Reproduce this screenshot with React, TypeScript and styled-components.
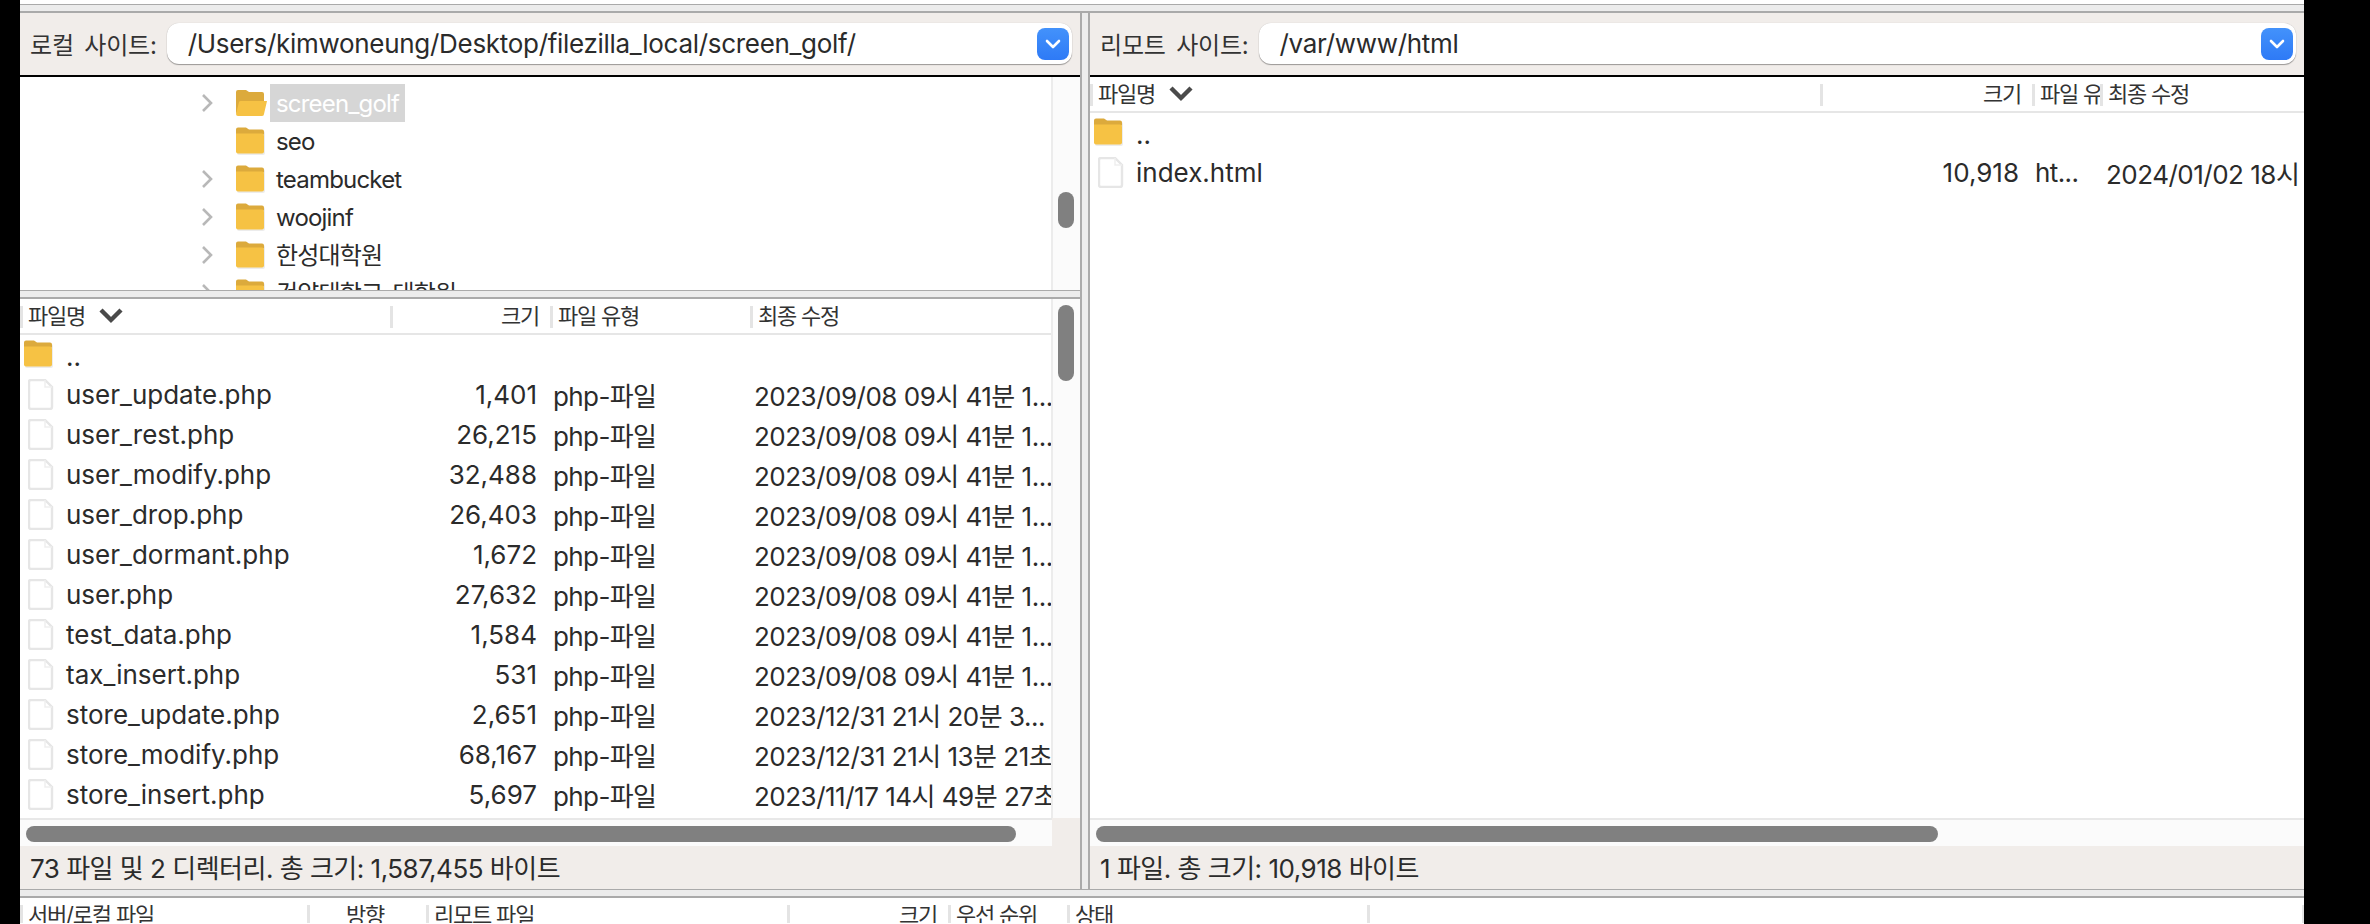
import React from "react";
import styled, { createGlobalStyle } from "styled-components";

const FONT = `Inter, "Noto Sans CJK KR", sans-serif`;

const Global = createGlobalStyle`
  html, body { margin: 0; padding: 0; background: #000; }
  * { box-sizing: border-box; }
`;

const Screen = styled.div`
  width: 2370px;
  height: 924px;
  background: #000;
  overflow: hidden;
  padding-left: 20px;
  font-family: ${FONT};
  color: #2b2b2b;
`;
const Win = styled.div`
  width: 2284px;
  height: 924px;
  display: flex;
  flex-direction: column;
  background: #fff;
  overflow: hidden;
`;
const LogStrip = styled.div`
  height: 5px;
  flex: none;
  overflow: hidden;
  background: #fff;
  border-bottom: 1px solid #aaa;
  position: relative;
`;
const LogText = styled.div`
  position: absolute;
  left: 8px;
  bottom: 2px;
  font-size: 22px;
  line-height: 26px;
  white-space: nowrap;
  color: #444;
`;
const SashH = styled.div`
  height: 8px;
  flex: none;
  background: #ececec;
  border-bottom: 2px solid #aaa;
`;
const SashHTop = styled(SashH)`
  height: 9px;
  border-top: 1px solid #aaa;
`;
const Panes = styled.div`
  display: flex;
  height: 876px;
  flex: none;
`;
const Pane = styled.div<{ $w: number }>`
  width: ${(p) => p.$w}px;
  flex: none;
  display: flex;
  flex-direction: column;
`;
const SashV = styled.div`
  width: 10px;
  flex: none;
  background: #ececec;
  border-left: 2px solid #aaa;
  border-right: 2px solid #aaa;
`;
const SiteBar = styled.div`
  height: 64px;
  flex: none;
  display: flex;
  align-items: center;
  background: #f1edea;
  border-bottom: 2px solid #000;
  padding: 0 8px 1px 10px;
  gap: 10px;
`;
const SiteLabel = styled.span`
  font-size: 24px;
  letter-spacing: -0.2px;
  word-spacing: 4px;
  white-space: nowrap;
  flex: none;
  color: #333;
`;
const Combo = styled.div`
  flex: 1;
  height: 41px;
  background: #fff;
  border-radius: 12px;
  box-shadow: 0 1px 1px rgba(0, 0, 0, 0.35), 0 0 1px rgba(0, 0, 0, 0.2);
  display: flex;
  align-items: center;
  padding: 0 3px 0 21px;
`;
const ComboText = styled.span`
  flex: 1;
  font-size: 26px;
  letter-spacing: -0.3px;
  color: #2b2b2b;
  white-space: nowrap;
`;
const ComboBtn = styled.div`
  width: 32px;
  height: 32px;
  flex: none;
  border-radius: 8px;
  background: linear-gradient(#4392fb, #2e7af6);
  display: flex;
  align-items: center;
  justify-content: center;
`;
const Tree = styled.div`
  height: 213px;
  flex: none;
  display: flex;
  overflow: hidden;
  background: #fff;
`;
const TreeRows = styled.div`
  flex: 1;
  padding-top: 7px;
  overflow: hidden;
`;
const TreeRow = styled.div`
  height: 38px;
  display: flex;
  align-items: center;
  padding-left: 181px;
`;
const ChevronSlot = styled.div`
  width: 35px;
  flex: none;
  display: flex;
`;
const FolderSlot = styled.div`
  width: 34px;
  flex: none;
  display: flex;
`;
const TreeLabel = styled.span<{ $selected?: boolean }>`
  height: 38px;
  line-height: 40px;
  padding: 0 6px;
  font-size: 24px;
  white-space: nowrap;
  letter-spacing: -0.8px;
  color: ${(p) => (p.$selected ? "#fff" : "#2b2b2b")};
  background: ${(p) => (p.$selected ? "#d6d6d6" : "transparent")};
`;
const VTrack = styled.div`
  width: 29px;
  flex: none;
  background: #fbfbfb;
  border-left: 2px solid #ececec;
  padding-left: 5px;
`;
const VThumb = styled.div<{ $top: number; $h: number }>`
  width: 16px;
  height: ${(p) => p.$h}px;
  margin-top: ${(p) => p.$top}px;
  border-radius: 8px;
  background: #808080;
`;
const ListWrap = styled.div`
  flex: 1;
  min-height: 0;
  display: flex;
  overflow: hidden;
  background: #fff;
`;
const ListMain = styled.div`
  flex: 1;
  min-width: 0;
  overflow: hidden;
`;
const HeaderRow = styled.div<{ $cols: string }>`
  height: 36px;
  display: grid;
  grid-template-columns: ${(p) => p.$cols};
  align-items: start;
  padding-top: 7px;
  border-bottom: 2px solid #e6e6e6;
`;
const QueueHeader = styled(HeaderRow)`
  height: 25px;
  flex: none;
  border-bottom: none;
  overflow: hidden;
`;
const HeadCell = styled.div<{ $align?: string }>`
  height: 22px;
  line-height: 20px;
  border-left: 3px solid #e4e4e4;
  padding: 0 11px 0 5px;
  font-size: 22px;
  letter-spacing: -1.2px;
  color: #333;
  white-space: nowrap;
  overflow: hidden;
  text-align: ${(p) => p.$align || "left"};
`;
const HeadCellLabel = styled.span`
  display: inline-flex;
  align-items: center;
  gap: 14px;
`;
const Row = styled.div<{ $cols: string }>`
  height: 40px;
  padding-bottom: 2px;
  display: grid;
  grid-template-columns: ${(p) => p.$cols};
  align-items: center;
  font-size: 26px;
`;
const NameCell = styled.div`
  display: flex;
  align-items: center;
  min-width: 0;
  white-space: nowrap;
`;
const IconSlot = styled.div`
  width: 46px;
  flex: none;
  display: flex;
  padding-left: 4px;
`;
const FileSlot = styled(IconSlot)`
  padding-left: 8px;
`;
const NameText = styled.span``;
const DotsText = styled(NameText)`
  margin-top: 5px;
`;
const SizeCell = styled.div`
  text-align: right;
  padding-right: 13px;
`;
const TypeCell = styled.div`
  padding-left: 3px;
  white-space: nowrap;
  overflow: hidden;
  letter-spacing: -0.6px;
`;
const DateCell = styled.div<{ $pad: number }>`
  padding-left: ${(p) => p.$pad}px;
  white-space: nowrap;
  overflow: hidden;
  letter-spacing: -0.5px;
`;
const HBar = styled.div`
  height: 28px;
  flex: none;
  display: flex;
  background: #f1edea;
`;
const HTrack = styled.div`
  flex: 1;
  background: #fbfbfb;
  border-top: 2px solid #e8e8e8;
  padding: 6px 0 0 6px;
`;
const HCorner = styled.div`
  width: 28px;
  flex: none;
  background: #f1edea;
`;
const HThumb = styled.div<{ $w: number }>`
  width: ${(p) => p.$w}px;
  height: 16px;
  border-radius: 8px;
  background: #808080;
`;
const StatusBar = styled.div`
  height: 43px;
  flex: none;
  background: #f1edea;
  display: flex;
  align-items: center;
  padding: 0 0 2px 10px;
  font-size: 26px;
  letter-spacing: -0.5px;
  color: #2b2b2b;
  white-space: nowrap;
`;

const Folder = ({ open }: { open?: boolean }) =>
  open ? (
    <svg width="32" height="28" viewBox="0 0 32 28">
      <path d="M0 3a2 2 0 0 1 2-2h8l3 2h13a2 2 0 0 1 2 2v20H2a2 2 0 0 1-2-2z" fill="#dcaa3c" />
      <path d="M3 13a2 2 0 0 1 2-1h26l-3 13a2 2 0 0 1-2 2H2a2 2 0 0 1-2-2z" fill="#f6c244" />
    </svg>
  ) : (
    <svg width="30" height="28" viewBox="0 0 30 28">
      <rect x="1" y="4" width="28" height="24" rx="2" fill="#ececec" />
      <path d="M0 2.5A2 2 0 0 1 2 .5h8l3 2h13a2 2 0 0 1 2 2v3H0z" fill="#dcaa3c" />
      <path d="M0 6.5h26a2 2 0 0 1 2 2v16a2 2 0 0 1-2 2H2a2 2 0 0 1-2-2z" fill="#f6c244" />
    </svg>
  );

const FileIcon = () => (
  <svg width="26" height="31" viewBox="0 0 26 31">
    <path
      d="M3 1h14l7 7v20a2 2 0 0 1-2 2H3a2 2 0 0 1-2-2V3a2 2 0 0 1 2-2z"
      fill="#fff"
      stroke="#e6e6e6"
      strokeWidth="2.4"
    />
    <path d="M17 1v7h7" fill="none" stroke="#efefef" strokeWidth="1.5" />
  </svg>
);

const TreeChevron = () => (
  <svg width="12" height="20" viewBox="0 0 12 20">
    <path d="M2 2l8 8-8 8" fill="none" stroke="#b8b8b8" strokeWidth="2.6" />
  </svg>
);

const SortChevron = () => (
  <svg width="24" height="18" viewBox="0 0 24 18">
    <path d="M2 3l10 10L22 3" fill="none" stroke="#4a4a4a" strokeWidth="4.4" />
  </svg>
);

const ComboChevron = () => (
  <svg width="16" height="12" viewBox="0 0 16 12">
    <path d="M2 3l6 6 6-6" fill="none" stroke="#fff" strokeWidth="2.6" strokeLinecap="round" strokeLinejoin="round" />
  </svg>
);

const LEFT_COLS = "370px 160px 200px 301px";
const RIGHT_COLS = "730px 212px 68px 204px";
const QUEUE_COLS = "287px 119px 361px 161px 119px 300px 935px 2px";

const D1 = "2023/09/08 09시 41분 1...";
const files: [string, string, string][] = [
  ["user_update.php", "1,401", D1],
  ["user_rest.php", "26,215", D1],
  ["user_modify.php", "32,488", D1],
  ["user_drop.php", "26,403", D1],
  ["user_dormant.php", "1,672", D1],
  ["user.php", "27,632", D1],
  ["test_data.php", "1,584", D1],
  ["tax_insert.php", "531", D1],
  ["store_update.php", "2,651", "2023/12/31 21시 20분 3..."],
  ["store_modify.php", "68,167", "2023/12/31 21시 13분 21초"],
  ["store_insert.php", "5,697", "2023/11/17 14시 49분 27초"],
];

const tree: { name: string; chevron: boolean; open?: boolean; selected?: boolean }[] = [
  { name: "screen_golf", chevron: true, open: true, selected: true },
  { name: "seo", chevron: false },
  { name: "teambucket", chevron: true },
  { name: "woojinf", chevron: true },
  { name: "한성대학원", chevron: true },
  { name: "건양대학교_대학원", chevron: true },
];

const ParentRow = ({ cols }: { cols: string }) => (
  <Row $cols={cols}>
    <NameCell>
      <IconSlot>
        <Folder />
      </IconSlot>
      <DotsText>..</DotsText>
    </NameCell>
  </Row>
);

export default function App() {
  return (
    <Screen>
      <Global />
      <Win>
        <LogStrip>
          <LogText>상태:  "/var/www/html" 디렉터리 목록 조회 성공</LogText>
        </LogStrip>
        <SashH />
        <Panes>
          <Pane $w={1060}>
            <SiteBar>
              <SiteLabel>로컬 사이트:</SiteLabel>
              <Combo>
                <ComboText>/Users/kimwoneung/Desktop/filezilla_local/screen_golf/</ComboText>
                <ComboBtn>
                  <ComboChevron />
                </ComboBtn>
              </Combo>
            </SiteBar>
            <Tree>
              <TreeRows>
                {tree.map((t) => (
                  <TreeRow key={t.name}>
                    <ChevronSlot>{t.chevron && <TreeChevron />}</ChevronSlot>
                    <FolderSlot>
                      <Folder open={t.open} />
                    </FolderSlot>
                    <TreeLabel $selected={t.selected}>{t.name}</TreeLabel>
                  </TreeRow>
                ))}
              </TreeRows>
              <VTrack>
                <VThumb $top={115} $h={36} />
              </VTrack>
            </Tree>
            <SashHTop />
            <ListWrap>
              <ListMain>
                <HeaderRow $cols={LEFT_COLS}>
                  <HeadCell>
                    <HeadCellLabel>
                      파일명 <SortChevron />
                    </HeadCellLabel>
                  </HeadCell>
                  <HeadCell $align="right">크기</HeadCell>
                  <HeadCell>파일 유형</HeadCell>
                  <HeadCell>최종 수정</HeadCell>
                </HeaderRow>
                <ParentRow cols={LEFT_COLS} />
                {files.map(([name, size, date]) => (
                  <Row key={name} $cols={LEFT_COLS}>
                    <NameCell>
                      <FileSlot>
                        <FileIcon />
                      </FileSlot>
                      <NameText>{name}</NameText>
                    </NameCell>
                    <SizeCell>{size}</SizeCell>
                    <TypeCell>php-파일</TypeCell>
                    <DateCell $pad={4}>{date}</DateCell>
                  </Row>
                ))}
              </ListMain>
              <VTrack>
                <VThumb $top={6} $h={76} />
              </VTrack>
            </ListWrap>
            <HBar>
              <HTrack>
                <HThumb $w={990} />
              </HTrack>
              <HCorner />
            </HBar>
            <StatusBar>73 파일 및 2 디렉터리. 총 크기: 1,587,455 바이트</StatusBar>
          </Pane>
          <SashV />
          <Pane $w={1214}>
            <SiteBar>
              <SiteLabel>리모트 사이트:</SiteLabel>
              <Combo>
                <ComboText>/var/www/html</ComboText>
                <ComboBtn>
                  <ComboChevron />
                </ComboBtn>
              </Combo>
            </SiteBar>
            <ListWrap>
              <ListMain>
                <HeaderRow $cols={RIGHT_COLS}>
                  <HeadCell>
                    <HeadCellLabel>
                      파일명 <SortChevron />
                    </HeadCellLabel>
                  </HeadCell>
                  <HeadCell $align="right">크기</HeadCell>
                  <HeadCell>파일 유</HeadCell>
                  <HeadCell>최종 수정</HeadCell>
                </HeaderRow>
                <ParentRow cols={RIGHT_COLS} />
                <Row $cols={RIGHT_COLS}>
                  <NameCell>
                    <FileSlot>
                      <FileIcon />
                    </FileSlot>
                    <NameText>index.html</NameText>
                  </NameCell>
                  <SizeCell>10,918</SizeCell>
                  <TypeCell>ht...</TypeCell>
                  <DateCell $pad={6}>2024/01/02 18시</DateCell>
                </Row>
              </ListMain>
            </ListWrap>
            <HBar>
              <HTrack>
                <HThumb $w={842} />
              </HTrack>
            </HBar>
            <StatusBar>1 파일. 총 크기: 10,918 바이트</StatusBar>
          </Pane>
        </Panes>
        <SashHTop />
        <QueueHeader $cols={QUEUE_COLS}>
          <HeadCell>서버/로컬 파일</HeadCell>
          <HeadCell $align="center">방향</HeadCell>
          <HeadCell>리모트 파일</HeadCell>
          <HeadCell $align="right">크기</HeadCell>
          <HeadCell>우선 순위</HeadCell>
          <HeadCell>상태</HeadCell>
          <HeadCell />
          <HeadCell />
        </QueueHeader>
      </Win>
    </Screen>
  );
}
